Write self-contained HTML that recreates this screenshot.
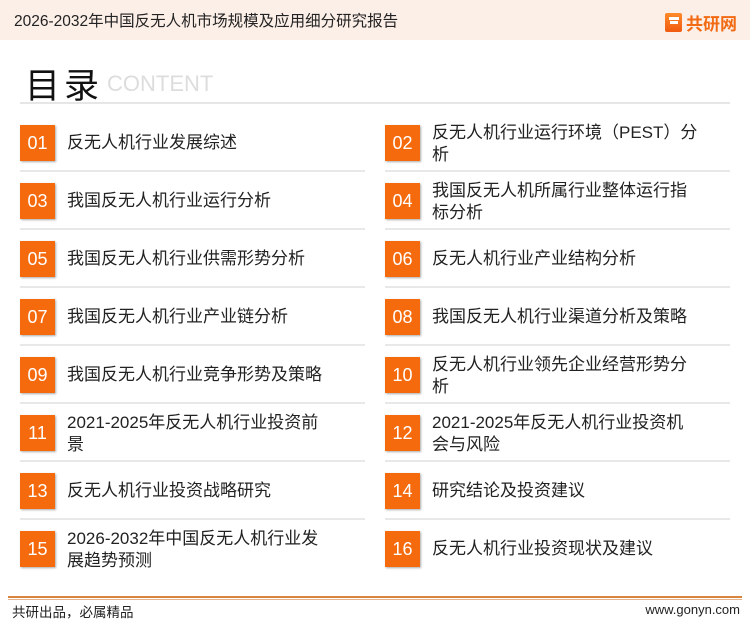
<!DOCTYPE html>
<html><head><meta charset="utf-8"><style>
*{margin:0;padding:0;box-sizing:border-box}
body{width:750px;height:622px;background:#fff;font-family:"Liberation Sans","Noto Sans CJK SC",sans-serif;position:relative;overflow:hidden;color:#222}
.hdr{position:absolute;left:0;top:0;width:750px;height:40px;background:#fcefe8}
.hdr .t{position:absolute;left:14px;top:9px;font-size:15.5px;color:#222}
.logo{position:absolute;left:665px;top:10px;display:flex;align-items:center}
.logo .g{width:17px;height:19px;background:linear-gradient(#ff8a2a,#f05a10);border-radius:2px;position:relative;margin-right:4px}
.logo .g:after{content:"";position:absolute;left:5px;top:8px;width:8px;height:3px;background:#fff}
.logo .g:before{content:"";position:absolute;left:4px;top:4px;width:10px;height:3px;background:#fff}
.logo span{color:#f26a12;font-weight:bold;font-size:17px}
.ml{position:absolute;left:25px;top:58px;font-size:35px;color:#111;letter-spacing:4px}
.ct{position:absolute;left:107px;top:71px;font-size:22px;color:#ddd}
.hl{position:absolute;left:20px;top:102px;width:710px;height:2px;background:#e6e6e6}
.it{position:absolute;height:36px}
.it .n{position:absolute;left:0;top:0;width:35px;height:36px;background:#f56a0c;color:#fff;font-size:18px;line-height:36px;text-align:center;box-shadow:1px 1px 2px #aaa}
.it .x{position:absolute;left:47px;white-space:nowrap;font-size:17px;line-height:22px;color:#222}
.sep{position:absolute;height:2px;width:345px;background:#e8e8e8}
.bl1{position:absolute;left:8px;top:596px;width:734px;height:2px;background:#d9843f}
.bl2{position:absolute;left:8px;top:599px;width:734px;height:1px;background:#e6b48a}
.ft{position:absolute;left:12px;top:601px;font-size:13.5px;color:#222}
.fr{position:absolute;right:10px;top:602px;font-size:13px;color:#222}
</style></head><body>
<div class="hdr"><div class="t">2026-2032年中国反无人机市场规模及应用细分研究报告</div>
<div class="logo"><div class="g"></div><span>共研网</span></div></div>
<div class="ml">目录</div><div class="ct">CONTENT</div>
<div class="hl"></div>

<div class="it" style="left:20px;top:125px"><div class="n">01</div><div class="x" style="top:7px">反无人机行业发展综述</div></div>
<div class="it" style="left:385px;top:125px"><div class="n">02</div><div class="x" style="top:-3px">反无人机行业运行环境（PEST）分<br>析</div></div>
<div class="it" style="left:20px;top:183px"><div class="n">03</div><div class="x" style="top:7px">我国反无人机行业运行分析</div></div>
<div class="it" style="left:385px;top:183px"><div class="n">04</div><div class="x" style="top:-3px">我国反无人机所属行业整体运行指<br>标分析</div></div>
<div class="it" style="left:20px;top:241px"><div class="n">05</div><div class="x" style="top:7px">我国反无人机行业供需形势分析</div></div>
<div class="it" style="left:385px;top:241px"><div class="n">06</div><div class="x" style="top:7px">反无人机行业产业结构分析</div></div>
<div class="it" style="left:20px;top:299px"><div class="n">07</div><div class="x" style="top:7px">我国反无人机行业产业链分析</div></div>
<div class="it" style="left:385px;top:299px"><div class="n">08</div><div class="x" style="top:7px">我国反无人机行业渠道分析及策略</div></div>
<div class="it" style="left:20px;top:357px"><div class="n">09</div><div class="x" style="top:7px">我国反无人机行业竞争形势及策略</div></div>
<div class="it" style="left:385px;top:357px"><div class="n">10</div><div class="x" style="top:-3px">反无人机行业领先企业经营形势分<br>析</div></div>
<div class="it" style="left:20px;top:415px"><div class="n">11</div><div class="x" style="top:-3px">2021-2025年反无人机行业投资前<br>景</div></div>
<div class="it" style="left:385px;top:415px"><div class="n">12</div><div class="x" style="top:-3px">2021-2025年反无人机行业投资机<br>会与风险</div></div>
<div class="it" style="left:20px;top:473px"><div class="n">13</div><div class="x" style="top:7px">反无人机行业投资战略研究</div></div>
<div class="it" style="left:385px;top:473px"><div class="n">14</div><div class="x" style="top:7px">研究结论及投资建议</div></div>
<div class="it" style="left:20px;top:531px"><div class="n">15</div><div class="x" style="top:-3px">2026-2032年中国反无人机行业发<br>展趋势预测</div></div>
<div class="it" style="left:385px;top:531px"><div class="n">16</div><div class="x" style="top:7px">反无人机行业投资现状及建议</div></div>

<div class="sep" style="left:20px;top:170px"></div><div class="sep" style="left:385px;top:170px"></div>
<div class="sep" style="left:20px;top:228px"></div><div class="sep" style="left:385px;top:228px"></div>
<div class="sep" style="left:20px;top:286px"></div><div class="sep" style="left:385px;top:286px"></div>
<div class="sep" style="left:20px;top:344px"></div><div class="sep" style="left:385px;top:344px"></div>
<div class="sep" style="left:20px;top:402px"></div><div class="sep" style="left:385px;top:402px"></div>
<div class="sep" style="left:20px;top:460px"></div><div class="sep" style="left:385px;top:460px"></div>
<div class="sep" style="left:20px;top:518px"></div><div class="sep" style="left:385px;top:518px"></div>

<div class="bl1"></div><div class="bl2"></div>
<div class="ft">共研出品，必属精品</div>
<div class="fr">www.gonyn.com</div>
</body></html>
